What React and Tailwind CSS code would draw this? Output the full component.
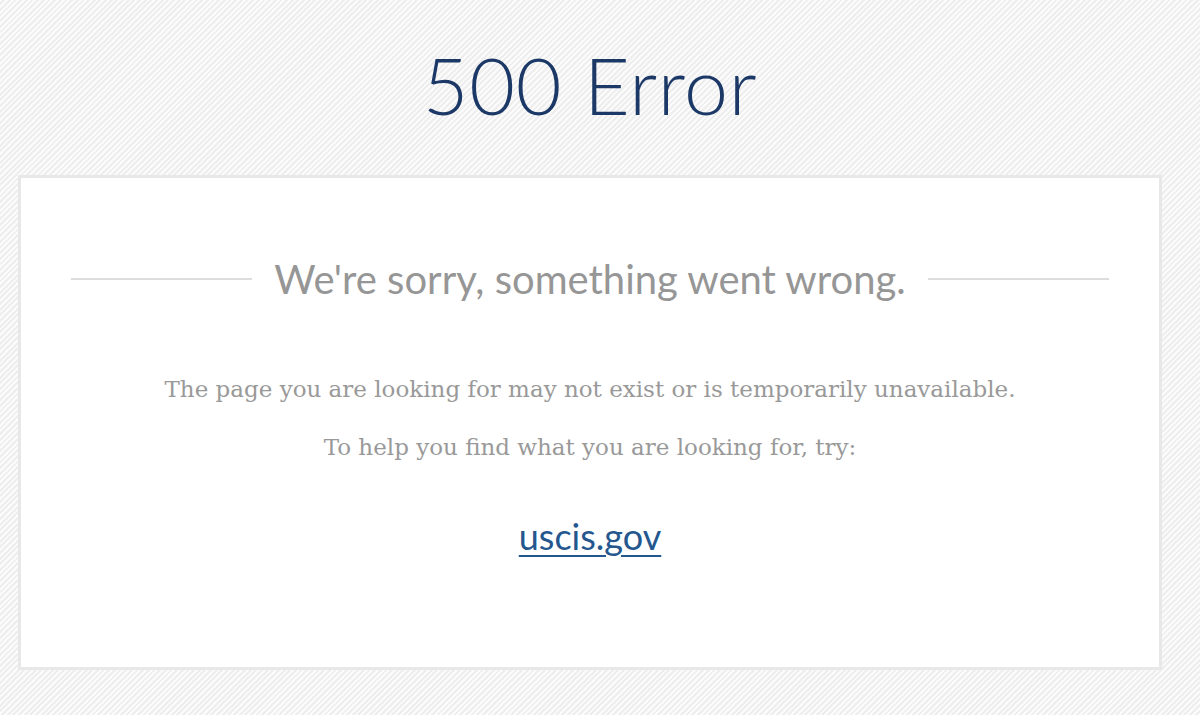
export default function App() {
    return (
        <div className="min-h-[715px] w-full pl-[18px] pr-[38px] pt-[38px] pb-[45px] bg-[repeating-linear-gradient(135deg,#fbfbfb_0px,#fbfbfb_2px,#eeeeee_2px,#eeeeee_4px)]">
            {/* title */}
            <h1 className="text-center text-[79px] leading-[94px] font-light text-[#1b3866] font-['Lato',sans-serif] tracking-[0.6px]">
                500 Error
            </h1>

            {/* card */}
            <div className="mt-[43px] h-[495px] border-[3px] border-[#e8e8e8] bg-white px-[50px] pt-[79px]">
                <div className="flex items-center gap-[22px]">
                    <div className="flex-1 h-[2px] bg-[#dddddd]"></div>
                    <h2 className="text-[40px] leading-[44px] font-normal text-[#969696] font-['Lato',sans-serif]">
                        We're sorry, something went wrong.
                    </h2>
                    <div className="flex-1 h-[2px] bg-[#dddddd]"></div>
                </div>

                <div className="mt-[73px] text-center text-[23px] leading-[30px] text-[#999999] font-['DejaVu_Serif',serif]">
                    <p>The page you are looking for may not exist or is temporarily unavailable.</p>
                    <p className="mt-[28px]">To help you find what you are looking for, try:</p>
                </div>

                <div className="mt-[52px] text-center">
                    <a href="#" className="text-[36px] leading-[44px] text-[#25578f] underline underline-offset-[5px] decoration-2 font-['Lato',sans-serif]">
                        uscis.gov
                    </a>
                </div>
            </div>
        </div>
    );
}
